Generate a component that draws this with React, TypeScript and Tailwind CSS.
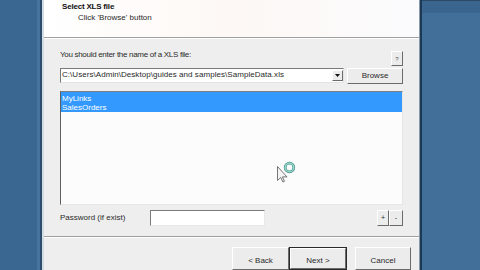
import React from "react";

function ClassicButton({ className = "", children }: { className?: string; children?: React.ReactNode }) {
  return (
    <div
      className={
        "flex items-center justify-center border border-t-white border-l-white border-r-[#6b6b6b] border-b-[#6b6b6b] bg-[#ececec] " +
        className
      }
    >
      {children}
    </div>
  );
}

export default function App() {
  return (
    <div className="relative flex w-[480px] h-[270px] overflow-hidden bg-[#3c6a94] font-['Liberation_Sans',Arial,sans-serif] text-[8px] leading-[10px] text-[#2a2a2a]">
      {/* left desktop */}
      <div className="flex w-[40px] bg-[#3a6791]">
        <div className="flex-1" />
        <div className="w-[3px] bg-[#46749e]" />
      </div>
      <div className="w-[2px] bg-[#2c4d6c]" />
      <div className="w-[2px] bg-[#d3dbe3]" />

      {/* dialog */}
      <div className="flex w-[375px] flex-col bg-[#eeeeee]">
        {/* header */}
        <div className="h-[38px] bg-gradient-to-r from-white via-[#fdf8f5] to-[#fbfbfd] pl-[18px] pt-[2px]">
          <div className="font-bold tracking-[-0.2px] text-[#111]">Select XLS file</div>
          <div className="mt-[1px] pl-[16px]">Click 'Browse' button</div>
        </div>
        <div className="h-[1px] bg-[#a0a0a0]" />
        <div className="h-[1px] bg-white" />

        {/* body */}
        <div className="flex h-[201px] flex-col px-[16px]">
          <div className="mt-[11px] flex h-[16px] items-start justify-between">
            <div className="tracking-[-0.3px]">You should enter the name of a XLS file:</div>
            <ClassicButton className="mt-[1px] h-[15px] w-[12px] text-[6px] leading-[6px] text-[#555]">?</ClassicButton>
          </div>

          <div className="mt-[2px] flex h-[16px] items-start">
            <div className="flex h-[15px] w-[284px] border border-t-[#7a7a7a] border-l-[#7a7a7a] border-r-[#e4e4e4] border-b-[#e4e4e4] bg-white">
              <div className="flex-1 whitespace-nowrap pl-[1px] pt-[1px] tracking-[0.05px]">
                C:\Users\Admin\Desktop\guides and samples\SampleData.xls
              </div>
              <ClassicButton className="my-[1px] h-[11px] w-[11px]">
                <svg width="5" height="3" viewBox="0 0 5 3">
                  <path d="M0 0 H5 L2.5 3 Z" fill="#111" />
                </svg>
              </ClassicButton>
            </div>
            <ClassicButton className="ml-[3px] h-[16px] w-[56px]">Browse</ClassicButton>
          </div>

          <div className="mt-[7px] h-[114px] w-full border border-t-[#7f7f7f] border-l-[#5f5f5f] border-r-[#e6e6e6] border-b-[#e6e6e6] bg-[#fcfcfc]">
            <div className="h-[20px] bg-[#3399ff] pl-[1px] pt-[2px] leading-[9px] text-white">
              <div>MyLinks</div>
              <div>SalesOrders</div>
            </div>
          </div>

          <div className="mt-[5px] flex h-[16px] items-center">
            <div className="w-[90px]">Password (if exist)</div>
            <div className="h-[16px] w-[115px] border border-t-[#7a7a7a] border-l-[#7a7a7a] border-r-[#e8e8e8] border-b-[#e8e8e8] bg-white" />
            <div className="flex-1" />
            <ClassicButton className="h-[16px] w-[12px] text-[7px]">+</ClassicButton>
            <ClassicButton className="h-[16px] w-[14px] text-[7px]">-</ClassicButton>
          </div>
        </div>

        <div className="h-[1px] bg-[#a0a0a0]" />
        <div className="h-[1px] bg-white" />

        {/* footer */}
        <div className="flex flex-1 items-start justify-end pr-[8px] pt-[9px]">
          <ClassicButton className="h-[23px] w-[57px] items-start pt-[8px]">&lt; Back</ClassicButton>
          <div className="h-[23px] w-[58px] border border-[#2a2a2a]">
            <div className="flex h-full w-full items-start justify-center border border-t-white border-l-white border-r-[#6b6b6b] border-b-[#6b6b6b] bg-[#ececec] pt-[7px]">
              Next &gt;
            </div>
          </div>
          <ClassicButton className="ml-[8px] h-[23px] w-[56px] items-start pt-[8px]">Cancel</ClassicButton>
        </div>
      </div>

      <div className="w-[1px] bg-[#8a9aab]" />
      <div className="w-[2px] bg-[#1d3854]" />

      {/* right desktop */}
      <div className="flex flex-1 flex-col">
        <div className="h-[1px] bg-[#2b4a68]" />
        <div className="h-[12px] bg-[#3a658e]" />
        <div className="flex-1 bg-[#426f99]" />
      </div>

      {/* busy cursor */}
      <svg className="absolute left-[276px] top-[158px]" width="22" height="26" viewBox="0 0 22 26">
        <circle cx="13.5" cy="9.5" r="4.3" fill="none" stroke="#4f8f88" strokeWidth="2.8" />
        <circle cx="13.5" cy="9.5" r="4.3" fill="none" stroke="#8fd8cc" strokeWidth="1.6" />
        <path
          d="M1.5 8.5 L1.5 22.5 L4.7 19.5 L6.9 24 L8.5 23.3 L6.4 18.9 L11 18.9 Z"
          fill="#f4f4f4"
          stroke="#555"
          strokeWidth="0.8"
          strokeLinejoin="round"
        />
      </svg>
    </div>
  );
}
